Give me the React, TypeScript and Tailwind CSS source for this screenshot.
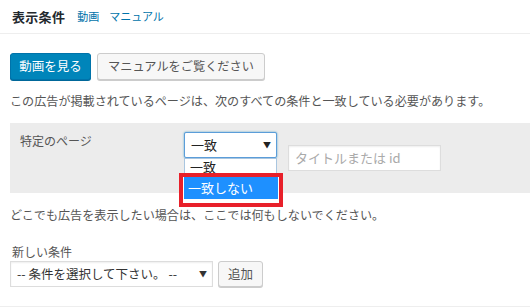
export default function App() {
  return (
    <div
      className="w-[530px] h-[308px] bg-white text-[#555] overflow-hidden"
      style={{ fontFamily: '"Noto Sans CJK JP", "Noto Sans", sans-serif' }}
    >
      {/* Header */}
      <div className="h-[34px] border-b border-[#eeeeee] flex items-center pl-[12px]">
        <span className="text-[13px] font-bold text-[#23282d] tracking-[0.3px]">表示条件</span>
        <a className="ml-[12px] text-[11px] text-[#0073aa]">動画</a>
        <a className="ml-[10px] text-[11px] text-[#0073aa]">マニュアル</a>
      </div>

      <div className="pl-[10px]">
        {/* Buttons */}
        <div className="mt-[19px] flex gap-[6px]">
          <button className="h-[27px] w-[81px] rounded-[3px] bg-[#0085ba] border border-[#0073aa] text-white text-[12.5px] shadow-[0_1px_0_#006799]">
            動画を見る
          </button>
          <button className="h-[27px] w-[168px] rounded-[3px] bg-[#f7f7f7] border border-[#cccccc] text-[#555] text-[12.2px] shadow-[0_1px_0_#cccccc]">
            マニュアルをご覧ください
          </button>
        </div>

        <p className="mt-[11px] leading-[20px] text-[12.1px]">
          この広告が掲載されているページは、次のすべての条件と一致している必要があります。
        </p>

        {/* Condition panel */}
        <div className="mt-[12px] h-[70px] bg-[#ececec] flex">
          <div className="w-[174px] pl-[10px] pt-[9px] text-[12px] leading-[18px]">特定のページ</div>
          <div className="relative pt-[9px]">
            <div className="h-[26px] w-[93px] bg-white border border-[#5b9dd9] rounded-[2px] shadow-[0_0_2px_rgba(30,140,190,0.8)] flex items-center justify-between pl-[6px] pr-[5px] text-[13px] text-[#222]">
              <span>一致</span>
              <span className="text-[8px]">▼</span>
            </div>
            <div className="absolute left-0 top-[35px] w-[93px] h-[44px] bg-white border border-[#a9c6e0] z-10">
              <div className="pl-[5px] text-[13px] leading-[15px] text-[#222]">一致</div>
            </div>
            <div className="absolute left-[-5px] top-[50px] w-[104px] h-[34px] border-[4px] border-[#e8202a] z-20 bg-white">
              <div className="h-[22px] mx-[1px] bg-[#1e90ff] text-white text-[13px] leading-[22px] pl-[4px]">一致しない</div>
            </div>
          </div>
          <div className="ml-[11px] mt-[22px] h-[26px] w-[153px] bg-white border border-[#dddddd] shadow-[inset_0_1px_2px_rgba(0,0,0,0.07)] flex items-center pl-[6px] text-[13px] text-[#aaa]">
            タイトルまたは id
          </div>
        </div>

        <p className="mt-[12px] leading-[20px] text-[12.1px]">
          どこでも広告を表示したい場合は、ここでは何もしないでください。
        </p>

        <div className="mt-[18px] pl-[2px] text-[12px] leading-[18px]">新しい条件</div>
        <div className="flex gap-[5px]">
          <div className="h-[26px] w-[203px] bg-white border border-[#dddddd] shadow-[inset_0_1px_2px_rgba(0,0,0,0.07)] flex items-center justify-between pl-[6px] pr-[5px] text-[12.5px] text-[#333]">
            <span>-- 条件を選択して下さい。 --</span>
            <span className="text-[8px]">▼</span>
          </div>
          <button className="h-[26px] w-[45px] rounded-[3px] bg-[#f7f7f7] border border-[#cccccc] text-[#555] text-[12.5px] shadow-[0_1px_0_#cccccc]">
            追加
          </button>
        </div>
      </div>
      <div className="mt-[19px] border-b border-[#eeeeee]" />
    </div>
  );
}
